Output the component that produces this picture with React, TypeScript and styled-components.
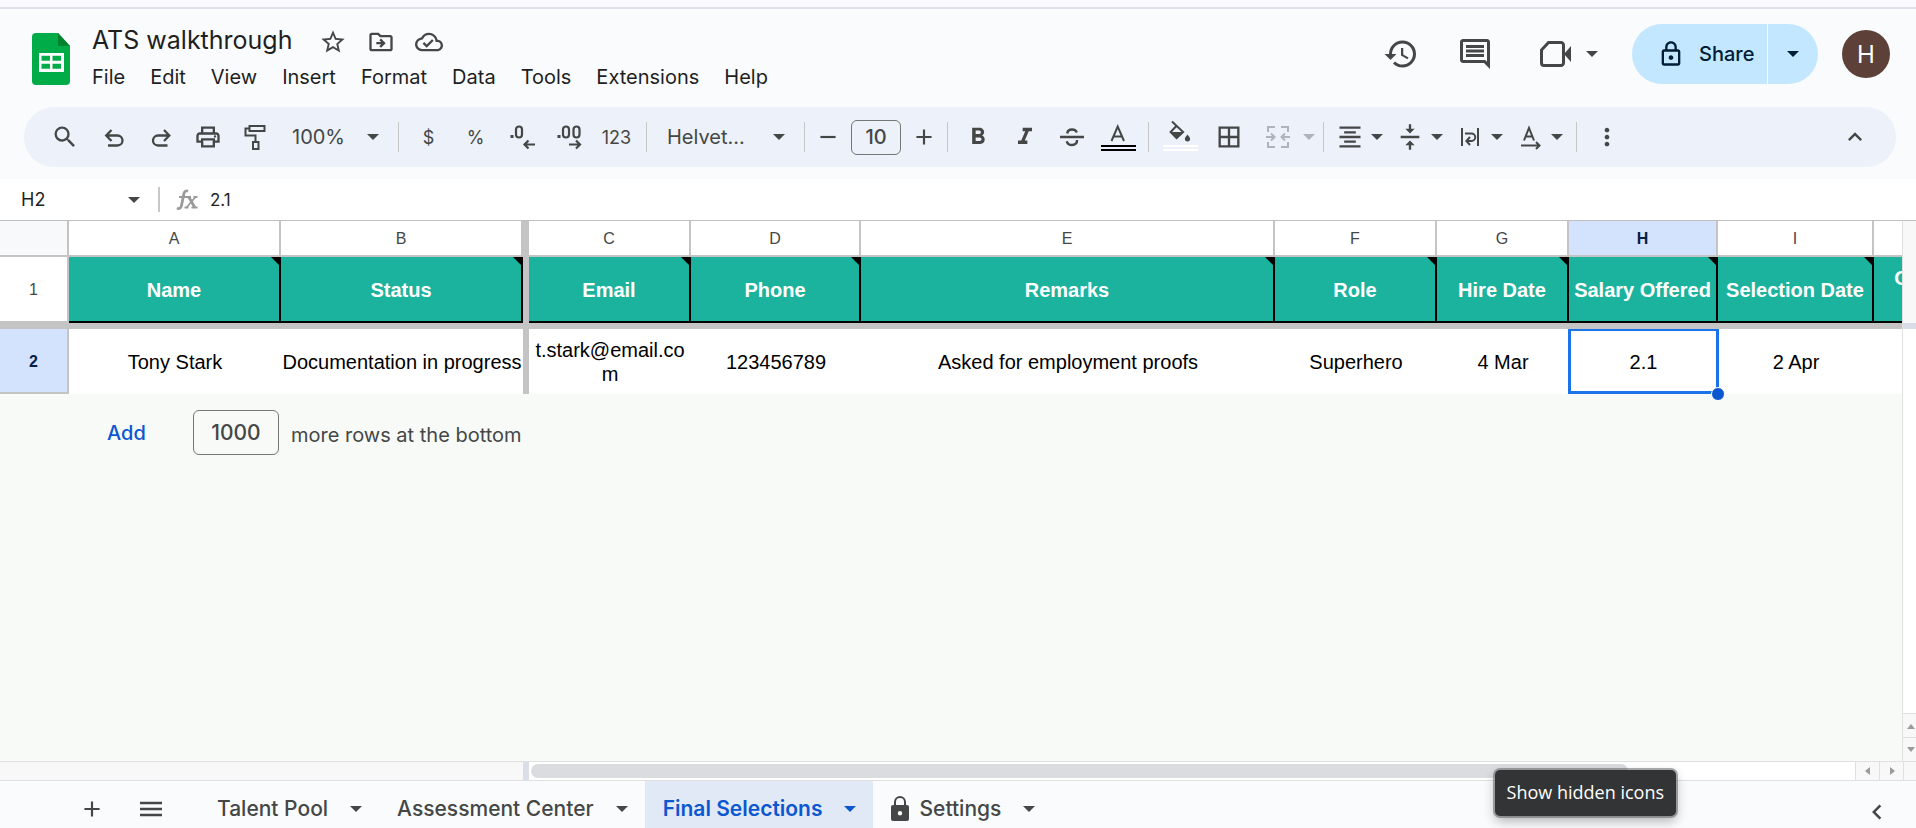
import React from "react";
import styled, { createGlobalStyle, css } from "styled-components";
import {
  MdSearch,
  MdStarBorder,
  MdOutlineDriveFileMove,
  MdOutlineCloudDone,
  MdHistory,
  MdOutlineInsertComment,
  MdOutlinePrint,
  MdOutlineLock,
  MdFormatBold,
  MdFormatItalic,
  MdBorderAll,
  MdFormatAlignCenter,
  MdVerticalAlignCenter,
  MdMoreVert,
  MdAdd,
  MdRemove,
  MdKeyboardArrowUp,
  MdKeyboardArrowLeft,
} from "react-icons/md";

const ui = `Inter, Roboto, "Liberation Sans", sans-serif`;
const cellFont = `"Liberation Sans", Arial, sans-serif`;
const ink = "#444746";

const GlobalStyle = createGlobalStyle`
  *, *::before, *::after { box-sizing: border-box; }
  body { margin: 0; background: #f9fbfd; font-family: ${ui}; color: ${ink}; overflow: hidden; }
  button, input, select { font: inherit; color: inherit; border: 0; margin: 0; padding: 0; background: none; }
  button { cursor: pointer; }
  svg { display: block; flex: none; }
`;

const Page = styled.div`
  display: flex;
  flex-direction: column;
  height: 100vh;
`;

const BrowserEdge = styled.div`
  flex: none;
  height: 9px;
  background: #faf9ff;
  border-bottom: 2px solid #dfe1eb;
`;

/* ---------- header ---------- */

const Header = styled.header`
  flex: none;
  display: flex;
  align-items: flex-start;
  height: 98px;
  padding: 14px 26px 0 32px;
`;

const Logo = styled.a`
  margin-top: 10px;
`;

const TitleBlock = styled.div`
  flex: 1;
  margin-left: 22px;
`;

const TitleRow = styled.div`
  display: flex;
  align-items: center;
  height: 34px;
`;

const Title = styled.h1`
  margin: 0 27px 0 0;
  font-size: 25px;
  font-weight: 400;
  line-height: 34px;
  color: #1f1f1f;
`;

const TitleActions = styled.div`
  display: flex;
  gap: 20px;
  padding-top: 4px;
`;

const Menu = styled.nav`
  display: flex;
  gap: 25px;
  margin-top: 6px;
`;

const MenuItem = styled.button`
  font-size: 20px;
  line-height: 28px;
  color: #1f1f1f;
`;

const HeaderActions = styled.div`
  display: flex;
  align-items: center;
  height: 60px;
  margin-top: 1px;
`;

const HeaderButton = styled.button<{ $gap: number }>`
  display: flex;
  align-items: center;
  gap: 15px;
  margin-right: ${(p) => p.$gap}px;
`;

const Share = styled.div`
  display: flex;
  height: 60px;
  color: #001d35;
`;

const ShareMain = styled.button`
  display: flex;
  align-items: center;
  gap: 14px;
  width: 135px;
  padding-left: 25px;
  border-radius: 30px 0 0 30px;
  background: #c2e7ff;
  font-size: 20px;
  font-weight: 500;
`;

const ShareMore = styled.button`
  display: flex;
  align-items: center;
  width: 50px;
  margin-left: 1px;
  padding-left: 19px;
  border-radius: 0 30px 30px 0;
  background: #c2e7ff;
`;

const Avatar = styled.button`
  width: 48px;
  height: 48px;
  margin-left: 24px;
  border-radius: 50%;
  background: #5d4037;
  color: #fff;
  font-size: 24px;
`;

/* ---------- toolbar ---------- */

const Toolbar = styled.div`
  flex: none;
  display: flex;
  align-items: center;
  height: 60px;
  margin: 0 20px 12px 24px;
  padding: 0 14px 0 16px;
  border-radius: 30px;
  background: #ecf1fa;
`;

const Divider = styled.span`
  flex: none;
  width: 1px;
  height: 30px;
  margin: 0 6px;
  background: #c7c7c7;
`;

const Tool = styled.button<{ $w?: number }>`
  flex: none;
  display: flex;
  justify-content: center;
  align-items: center;
  width: ${(p) => p.$w ?? 47}px;
  height: 40px;
  font-size: 18px;
`;

const DropTool = styled.button<{ $wide?: boolean }>`
  flex: none;
  display: flex;
  align-items: center;
  gap: ${(p) => (p.$wide ? 11 : 7)}px;
  width: ${(p) => (p.$wide ? 65 : 60)}px;
  height: 40px;
  padding-left: ${(p) => (p.$wide ? 12 : 6)}px;
  color: ${(p) => (p.disabled ? "#b0b3b8" : ink)};
`;

const Spacer = styled.span`
  flex: 1;
`;

const SelectWrap = styled.label<{ $w: number }>`
  flex: none;
  display: flex;
  align-items: center;
  width: ${(p) => p.$w}px;
  padding: 0 13px 0 14px;

  select {
    flex: 1;
    min-width: 0;
    appearance: none;
    font-size: 20px;
    line-height: 26px;
    outline: 0;
  }
`;

const boxed = css`
  border: 1px solid #747775;
  border-radius: 6px;
  text-align: center;
  font-weight: 500;
`;

const SizeInput = styled.input`
  ${boxed}
  width: 50px;
  height: 35px;
  margin: 0 6px;
  font-size: 20px;
`;

/* ---------- formula bar ---------- */

const FormulaBar = styled.div`
  flex: none;
  display: flex;
  align-items: center;
  height: 42px;
  padding-left: 21px;
  background: #fff;
  border-bottom: 1px solid #c0c0c0;
`;

const NameBox = styled.input`
  width: 107px;
  font-size: 18px;
  color: #1f1f1f;
`;

const FormulaRule = styled.span`
  width: 2px;
  height: 25px;
  margin: 0 16px 0 18px;
  background: #c7c7c7;
`;

const FormulaInput = styled.input`
  flex: 1;
  margin-left: 12px;
  font-size: 17px;
  color: #1f1f1f;
`;

/* ---------- sheet ---------- */

const SheetArea = styled.main`
  flex: 1;
  display: flex;
  min-height: 0;
`;

const Canvas = styled.div`
  flex: 1;
  min-width: 0;
  overflow: hidden;
  background: #f8faf8;
`;

const Table = styled.table`
  width: 2030px;
  table-layout: fixed;
  border-collapse: separate;
  border-spacing: 0;
  background: #fff;
`;

const HeadCell = styled.th<{ $active?: boolean }>`
  padding: 2px 0 0;
  border-right: 2px solid #c4c4c4;
  border-bottom: 2px solid #c4c4c4;
  background: ${(p) => (p.$active ? "#d3e3fd" : "#fff")};
  color: ${(p) => (p.$active ? "#041e49" : ink)};
  font-family: ${cellFont};
  font-size: 16px;
  font-weight: ${(p) => (p.$active ? 700 : 400)};
`;

const ColHead = styled(HeadCell)`
  height: 36px;
`;

const Corner = styled(ColHead)`
  background: #f8f9fa;
`;

const TitleCell = styled.td`
  position: relative;
  height: 66px;
  padding: 2px 4px 0;
  border-right: 2px solid #000;
  border-bottom: 2px solid #000;
  background: #1cb39e;
  color: #fff;
  font: 700 20px/24px ${cellFont};
  text-align: center;

  &::after {
    content: "";
    position: absolute;
    top: 0;
    right: 0;
    width: 8px;
    height: 8px;
    background: #000;
    clip-path: polygon(0 0, 100% 0, 100% 100%);
  }
`;

const Cell = styled.td`
  position: relative;
  height: 65px;
  padding: 0;
  color: #000;
  font: 400 20px/24px ${cellFont};
  text-align: center;
  overflow-wrap: anywhere;
`;

const FreezeCell = styled.td`
  padding: 0;
  background: #c4c4c4;
`;

const FreezeRow = styled.td`
  height: 6px;
  padding: 0;
  background: #c4c4c4;
`;

const Selection = styled.span`
  position: absolute;
  inset: 0 -1px;
  border: 3px solid #1a73e8;
  border-top-width: 2px;

  &::after {
    content: "";
    position: absolute;
    right: -9px;
    bottom: -10px;
    width: 14px;
    height: 14px;
    border: 1px solid #fff;
    border-radius: 50%;
    background: #0b57d0;
  }
`;

const AddRows = styled.form`
  display: flex;
  align-items: center;
  padding: 16px 0 0 107px;
  font-size: 20px;
`;

const AddButton = styled.button`
  width: 86px;
  text-align: left;
  font-weight: 500;
  color: #0b57d0;
`;

const RowCount = styled.input`
  ${boxed}
  width: 86px;
  height: 45px;
  margin-right: 12px;
  font-size: 21px;
`;

const AddNote = styled.span`
  padding-top: 5px;
`;

const VScroll = styled.div`
  flex: none;
  display: flex;
  flex-direction: column;
  width: 14px;
  border-left: 1px solid #dfe1e0;
  background: #fff;
`;

const VFrozen = styled.div`
  height: 108px;
  background: #f8f8f8;
  border-bottom: 6px solid #d9dee8;
`;

const ScrollButton = styled.button<{ $side?: boolean }>`
  flex: none;
  display: flex;
  align-items: center;
  justify-content: center;
  width: ${(p) => (p.$side ? "24px" : "100%")};
  height: ${(p) => (p.$side ? "100%" : "24px")};
  padding-left: ${(p) => (p.$side ? 0 : 2)}px;
  border: 0 solid #dfe1e0;
  border-width: ${(p) => (p.$side ? "0 0 0 1px" : "1px 0 0")};
  background: #f8f8f8;
  color: #9a9a9a;
`;

const HScroll = styled.div`
  flex: none;
  display: flex;
  height: 20px;
  border: solid #dfe1e0;
  border-width: 1px 0;
  background: #fff;
`;

const HFrozen = styled.div`
  width: 529px;
  background: #f8f8f8;
  border-right: 6px solid #d9dee8;
`;

const HTrack = styled.div`
  flex: 1;
  padding: 2px;
`;

const HThumb = styled.div`
  width: 83%;
  height: 14px;
  border-radius: 7px;
  background: #dadce0;
`;

const HCorner = styled.div`
  width: 13px;
  border-left: 1px solid #dfe1e0;
  background: #f8f8f8;
`;

/* ---------- sheet tabs ---------- */

const TabBar = styled.footer`
  flex: none;
  display: flex;
  align-items: stretch;
  height: 47px;
  padding: 0 24px 0 62px;
`;

const TabTool = styled.button`
  display: flex;
  align-items: center;
  justify-content: center;
  width: 59px;
  padding-top: 8px;
`;

const SheetTab = styled.button<{ $active?: boolean }>`
  display: flex;
  align-items: center;
  gap: 22px;
  padding: 8px 17px 0 18px;
  background: ${(p) => (p.$active ? "#e1e9f7" : "none")};
  color: ${(p) => (p.$active ? "#0b57d0" : ink)};
  font-size: 21px;
  font-weight: ${(p) => (p.$active ? 600 : 500)};
`;

const TabLabel = styled.span`
  display: flex;
  align-items: center;
  gap: 10px;
`;

const Tabs = styled.div`
  display: flex;
  flex: 1;
  margin-left: 19px;
`;

const PanelToggle = styled.button`
  padding-top: 14px;
`;

const Tooltip = styled.div`
  position: absolute;
  right: 240px;
  bottom: 12px;
  padding: 10px 12px 12px;
  border-radius: 5px;
  background: #333435;
  box-shadow: 0 0 0 2px rgba(90, 90, 90, 0.5), 0 5px 12px rgba(0, 0, 0, 0.3);
  color: #fff;
  font: 400 18px/24px "Open Sans", "Noto Sans", sans-serif;
`;

/* ---------- drawings ---------- */

const Caret = ({ w = 12 }: { w?: number }) => (
  <svg width={w} height={w / 2} viewBox="0 0 12 6" aria-hidden="true">
    <path d="M0 0h12L6 6z" fill="currentColor" />
  </svg>
);

const SheetsLogo = () => (
  <svg width="38" height="52" viewBox="0 0 38 52" aria-hidden="true">
    <path d="M4 0h22l12 13v35a4 4 0 0 1-4 4H4a4 4 0 0 1-4-4V4a4 4 0 0 1 4-4z" fill="#00ac47" />
    <path d="M26 0l12 13H26z" fill="#00832d" />
    <path d="M7 20h25v19H7zM9.500 22.800v4.900h8.500v-4.900zM20.500 22.800v4.900h8.500v-4.900zM9.500 30.800v4.900h8.500v-4.900zM20.500 30.800v4.900h8.500v-4.900z" fill="#fff" fillRule="evenodd" />
  </svg>
);

const Line = ({ children, sw = 2 }: { children: React.ReactNode; sw?: number }) => (
  <svg width={28} height={28} viewBox="-2 -2 28 28" fill="none" stroke="currentColor" strokeWidth={sw} aria-hidden="true">
    {children}
  </svg>
);

const UndoIcon = () => (
  <Line sw={2.300}>
    <path d="M6 20.500h9.500a5 5 0 0 0 0-10H4.500M9.500 5l-5.300 5.500 5.300 5.500" />
  </Line>
);

const RedoIcon = () => (
  <Line sw={2.300}>
    <path d="M18.500 20.500H9a5 5 0 0 1 0-10h11M15 5l5.300 5.500L15 16" />
  </Line>
);

const RollerIcon = () => (
  <Line>
    <path d="M6.500 1h15v5h-15zM6.500 3.500H2.500v7h10V17M10 17h5.500v7H10z" />
  </Line>
);

const StrikeIcon = () => (
  <Line sw={2.400}>
    <path d="M0 12h24M7.200 8.500c.3-2.600 2.200-4 4.800-4 2.400 0 4.200 1.100 4.800 3M17 15c.2 3.300-1.800 5-5 5-2.700 0-4.600-1.300-5.200-3.800" />
  </Line>
);

const DecimalIcon = ({ more }: { more?: boolean }) => (
  <svg width="28" height="28" viewBox="0 0 28 28" fill="none" stroke="currentColor" aria-hidden="true">
    <path d="M1.500 13.500h3" strokeWidth="3" />
    <rect x="7" y="3.500" width="6" height="11" rx="3" strokeWidth="2.200" />
    {more && <rect x="17.500" y="3.500" width="6" height="11" rx="3" strokeWidth="2.200" />}
    {more ? (
      <path d="M13 21.500h10M20 17.500l4 4-4 4" strokeWidth="2.200" />
    ) : (
      <path d="M26 21.500H16M19.500 17.500l-4 4 4 4" strokeWidth="2.200" />
    )}
  </svg>
);

const TextColorIcon = () => (
  <svg width="35" height="40" viewBox="0 0 35 40" aria-hidden="true">
    <path d="M10.500 24l6.200-14.500L23 24M12.500 19.500h8.500" fill="none" stroke="currentColor" strokeWidth="2" />
    <path d="M0 29h35M0 33h35" stroke="#000" strokeWidth="2" />
  </svg>
);

const FillIcon = () => (
  <svg width="35" height="42" viewBox="0 0 35 42" aria-hidden="true">
    <path d="M9 5.500l6.500 6.300M13.600 9.800l-6 6.200 6 6.200 6.500-6.200-6.500-6.200z" fill="none" stroke="currentColor" strokeWidth="2" />
    <path d="M7 16h13.500l-7 7z" fill="currentColor" />
    <path d="M24.500 18.500c1.700 2.200 2.600 3.200 2.600 4.300a2.600 2.600 0 0 1-5.200 0c0-1.100.9-2.100 2.600-4.300z" fill="currentColor" />
    <path d="M0 30h35M0 34h35" stroke="#fff" strokeWidth="2" />
  </svg>
);

const MergeIcon = () => (
  <Line>
    <path d="M9 2H2v5M2 17v5h7M15 2h7v5M22 17v5h-7M0 12h8M5 8.500L8.500 12 5 15.500M24 12h-8M19 8.500L15.500 12l3.500 3.500" />
  </Line>
);

const WrapIcon = () => (
  <Line>
    <path d="M4 3v18M20 3v18M7 8.500h6.500a3.700 3.700 0 0 1 0 7.500H9M12 12l-3.600 4 3.600 4" />
  </Line>
);

const RotateIcon = () => (
  <Line>
    <path d="M6 15.500L11 3l5 12.500M7.500 11.500h7M3 20.500h18M18 17l3.500 3.500L18 24" />
  </Line>
);

const VideoIcon = () => (
  <svg width="31" height="28" viewBox="0 0 31 28" aria-hidden="true">
    <path d="M8.500 2.500H21a2.500 2.500 0 0 1 2.500 2.500v18a2.500 2.500 0 0 1-2.500 2.500H4A2.500 2.500 0 0 1 1.500 23V10z" fill="none" stroke="currentColor" strokeWidth="3" />
    <path d="M24 14l7-8v16z" fill="currentColor" />
  </svg>
);

const MenuLines = () => (
  <svg width="22" height="16" viewBox="0 0 22 16" aria-hidden="true">
    <path d="M0 2h22M0 8h22M0 14h22" stroke="currentColor" strokeWidth="2.300" />
  </svg>
);

const LockIcon = () => (
  <svg width="18" height="26" viewBox="0 0 18 26" aria-hidden="true">
    <path d="M4 10V6a5 5 0 0 1 10 0v4" fill="none" stroke="currentColor" strokeWidth="2" />
    <path d="M2 9h14a2 2 0 0 1 2 2v12a2 2 0 0 1-2 2H2a2 2 0 0 1-2-2V11a2 2 0 0 1 2-2zm7 6a2.200 2.200 0 1 0 0 4.400A2.200 2.200 0 0 0 9 15z" fill="currentColor" fillRule="evenodd" />
  </svg>
);

const FxIcon = () => (
  <svg width="22" height="22" viewBox="0 0 22 22" fill="none" stroke="#9a9a9a" aria-hidden="true">
    <path d="M1 19c2.500 1.500 4-.2 4.500-2.500L7.800 5c.6-3 2.400-3.700 4.200-2.700" strokeWidth="2.800" />
    <path d="M3 8h9M11 8h4M17.500 8h4M8.500 18.500h4M15.500 18.500h6M19.500 8l-9 10.500" strokeWidth="1.800" />
    <path d="M12.800 8l6 10.500" strokeWidth="2.800" />
  </svg>
);

const Arrow = ({ dir }: { dir: "up" | "down" | "left" | "right" }) => {
  const shapes = { up: "M0 7h8L4 2z", down: "M0 1h8L4 6z", left: "M6 0v8L1 4z", right: "M2 0v8l5-4z" };
  return (
    <svg width="8" height="8" viewBox="0 0 8 8" aria-hidden="true">
      <path d={shapes[dir]} fill="currentColor" />
    </svg>
  );
};

/* ---------- data ---------- */

const menus = ["File", "Edit", "View", "Insert", "Format", "Data", "Tools", "Extensions", "Help"];

const columns = [
  { id: "A", width: 212, title: "Name", value: "Tony Stark" },
  { id: "B", width: 242, title: "Status", value: "Documentation in progress" },
  { id: "C", width: 162, title: "Email", value: "t.stark@email.com" },
  { id: "D", width: 170, title: "Phone", value: "123456789" },
  { id: "E", width: 414, title: "Remarks", value: "Asked for employment proofs" },
  { id: "F", width: 162, title: "Role", value: "Superhero" },
  { id: "G", width: 132, title: "Hire Date", value: "4 Mar" },
  { id: "H", width: 149, title: "Salary Offered", value: "2.1" },
  { id: "I", width: 156, title: "Selection Date", value: "2 Apr" },
  { id: "J", width: 156, title: "Onboarding Date", value: "" },
];

const sheets = [
  { name: "Talent Pool" },
  { name: "Assessment Center" },
  { name: "Final Selections", active: true },
  { name: "Settings", locked: true },
];

const freezeAfter = "B";

export default function App() {
  return (
    <Page>
      <GlobalStyle />
      <BrowserEdge />
      <Header>
        <Logo href="#" aria-label="Sheets home">
          <SheetsLogo />
        </Logo>
        <TitleBlock>
          <TitleRow>
            <Title>ATS walkthrough</Title>
            <TitleActions>
              <button aria-label="Star"><MdStarBorder size={28} /></button>
              <button aria-label="Move"><MdOutlineDriveFileMove size={28} /></button>
              <button aria-label="Saved to Drive"><MdOutlineCloudDone size={28} /></button>
            </TitleActions>
          </TitleRow>
          <Menu>
            {menus.map((m) => (
              <MenuItem key={m}>{m}</MenuItem>
            ))}
          </Menu>
        </TitleBlock>
        <HeaderActions>
          <HeaderButton $gap={38} aria-label="Version history"><MdHistory size={36} /></HeaderButton>
          <HeaderButton $gap={47} aria-label="Comments"><MdOutlineInsertComment size={36} /></HeaderButton>
          <HeaderButton $gap={34} aria-label="Video call">
            <VideoIcon />
            <Caret />
          </HeaderButton>
          <Share>
            <ShareMain>
              <MdOutlineLock size={28} />
              Share
            </ShareMain>
            <ShareMore aria-label="Share options"><Caret /></ShareMore>
          </Share>
          <Avatar aria-label="Account">H</Avatar>
        </HeaderActions>
      </Header>

      <Toolbar role="toolbar">
        <Tool $w={50} aria-label="Search menus"><MdSearch size={28} /></Tool>
        <Tool aria-label="Undo"><UndoIcon /></Tool>
        <Tool aria-label="Redo"><RedoIcon /></Tool>
        <Tool aria-label="Print"><MdOutlinePrint size={28} /></Tool>
        <Tool aria-label="Paint format"><RollerIcon /></Tool>
        <SelectWrap $w={114}>
          <select aria-label="Zoom">
            <option>100%</option>
          </select>
          <Caret />
        </SelectWrap>
        <Divider />
        <Tool aria-label="Currency">$</Tool>
        <Tool aria-label="Percent">%</Tool>
        <Tool aria-label="Fewer decimals"><DecimalIcon /></Tool>
        <Tool aria-label="More decimals"><DecimalIcon more /></Tool>
        <Tool aria-label="Number formats">123</Tool>
        <Divider />
        <SelectWrap $w={145}>
          <select aria-label="Font">
            <option>Helvet...</option>
          </select>
          <Caret />
        </SelectWrap>
        <Divider />
        <Tool $w={34} aria-label="Smaller"><MdRemove size={26} /></Tool>
        <SizeInput aria-label="Font size" defaultValue="10" />
        <Tool $w={34} aria-label="Larger"><MdAdd size={26} /></Tool>
        <Divider />
        <Tool aria-label="Bold"><MdFormatBold size={28} /></Tool>
        <Tool aria-label="Italic"><MdFormatItalic size={28} /></Tool>
        <Tool aria-label="Strikethrough"><StrikeIcon /></Tool>
        <Tool aria-label="Text color"><TextColorIcon /></Tool>
        <Divider />
        <Tool $w={50} aria-label="Fill color"><FillIcon /></Tool>
        <Tool aria-label="Borders"><MdBorderAll size={28} /></Tool>
        <DropTool $wide disabled aria-label="Merge cells"><MergeIcon /><Caret /></DropTool>
        <Divider />
        <DropTool aria-label="Horizontal align"><MdFormatAlignCenter size={28} /><Caret /></DropTool>
        <DropTool aria-label="Vertical align"><MdVerticalAlignCenter size={28} /><Caret /></DropTool>
        <DropTool aria-label="Wrap"><WrapIcon /><Caret /></DropTool>
        <DropTool aria-label="Rotation"><RotateIcon /><Caret /></DropTool>
        <Divider />
        <Tool aria-label="More"><MdMoreVert size={28} /></Tool>
        <Spacer />
        <Tool $w={54} aria-label="Hide menus"><MdKeyboardArrowUp size={28} /></Tool>
      </Toolbar>

      <FormulaBar>
        <NameBox aria-label="Name box" defaultValue="H2" />
        <Caret />
        <FormulaRule />
        <FxIcon />
        <FormulaInput aria-label="Formula" defaultValue="2.1" />
      </FormulaBar>

      <SheetArea>
        <Canvas>
          <Table>
            <colgroup>
              <col width={69} />
              {columns.map((c) => (
                <React.Fragment key={c.id}>
                  <col width={c.width} />
                  {c.id === freezeAfter && <col width={6} />}
                </React.Fragment>
              ))}
            </colgroup>
            <thead>
              <tr>
                <Corner aria-label="Select all" />
                {columns.map((c) => (
                  <React.Fragment key={c.id}>
                    <ColHead scope="col" $active={c.id === "H"}>{c.id}</ColHead>
                    {c.id === freezeAfter && <FreezeCell />}
                  </React.Fragment>
                ))}
              </tr>
            </thead>
            <tbody>
              <tr>
                <HeadCell scope="row">1</HeadCell>
                {columns.map((c) => (
                  <React.Fragment key={c.id}>
                    <TitleCell>{c.title}</TitleCell>
                    {c.id === freezeAfter && <FreezeCell />}
                  </React.Fragment>
                ))}
              </tr>
              <tr>
                <FreezeRow colSpan={columns.length + 2} />
              </tr>
              <tr>
                <HeadCell scope="row" $active>2</HeadCell>
                {columns.map((c) => (
                  <React.Fragment key={c.id}>
                    <Cell>
                      {c.value}
                      {c.id === "H" && <Selection />}
                    </Cell>
                    {c.id === freezeAfter && <FreezeCell />}
                  </React.Fragment>
                ))}
              </tr>
            </tbody>
          </Table>
          <AddRows>
            <AddButton type="button">Add</AddButton>
            <RowCount aria-label="Number of rows" defaultValue="1000" />
            <AddNote>more rows at the bottom</AddNote>
          </AddRows>
        </Canvas>
        <VScroll>
          <VFrozen />
          <Spacer />
          <ScrollButton aria-label="Scroll up"><Arrow dir="up" /></ScrollButton>
          <ScrollButton aria-label="Scroll down"><Arrow dir="down" /></ScrollButton>
        </VScroll>
      </SheetArea>

      <HScroll>
        <HFrozen />
        <HTrack>
          <HThumb />
        </HTrack>
        <ScrollButton $side aria-label="Scroll left"><Arrow dir="left" /></ScrollButton>
        <ScrollButton $side aria-label="Scroll right"><Arrow dir="right" /></ScrollButton>
        <HCorner />
      </HScroll>

      <TabBar>
        <TabTool aria-label="Add sheet"><MdAdd size={26} /></TabTool>
        <TabTool aria-label="All sheets"><MenuLines /></TabTool>
        <Tabs>
          {sheets.map((s) => (
            <SheetTab key={s.name} $active={s.active}>
              <TabLabel>
                {s.locked && <LockIcon />}
                {s.name}
              </TabLabel>
              <Caret />
            </SheetTab>
          ))}
        </Tabs>
        <PanelToggle aria-label="Show side panel"><MdKeyboardArrowLeft size={30} /></PanelToggle>
      </TabBar>
      <Tooltip role="tooltip">Show hidden icons</Tooltip>
    </Page>
  );
}
